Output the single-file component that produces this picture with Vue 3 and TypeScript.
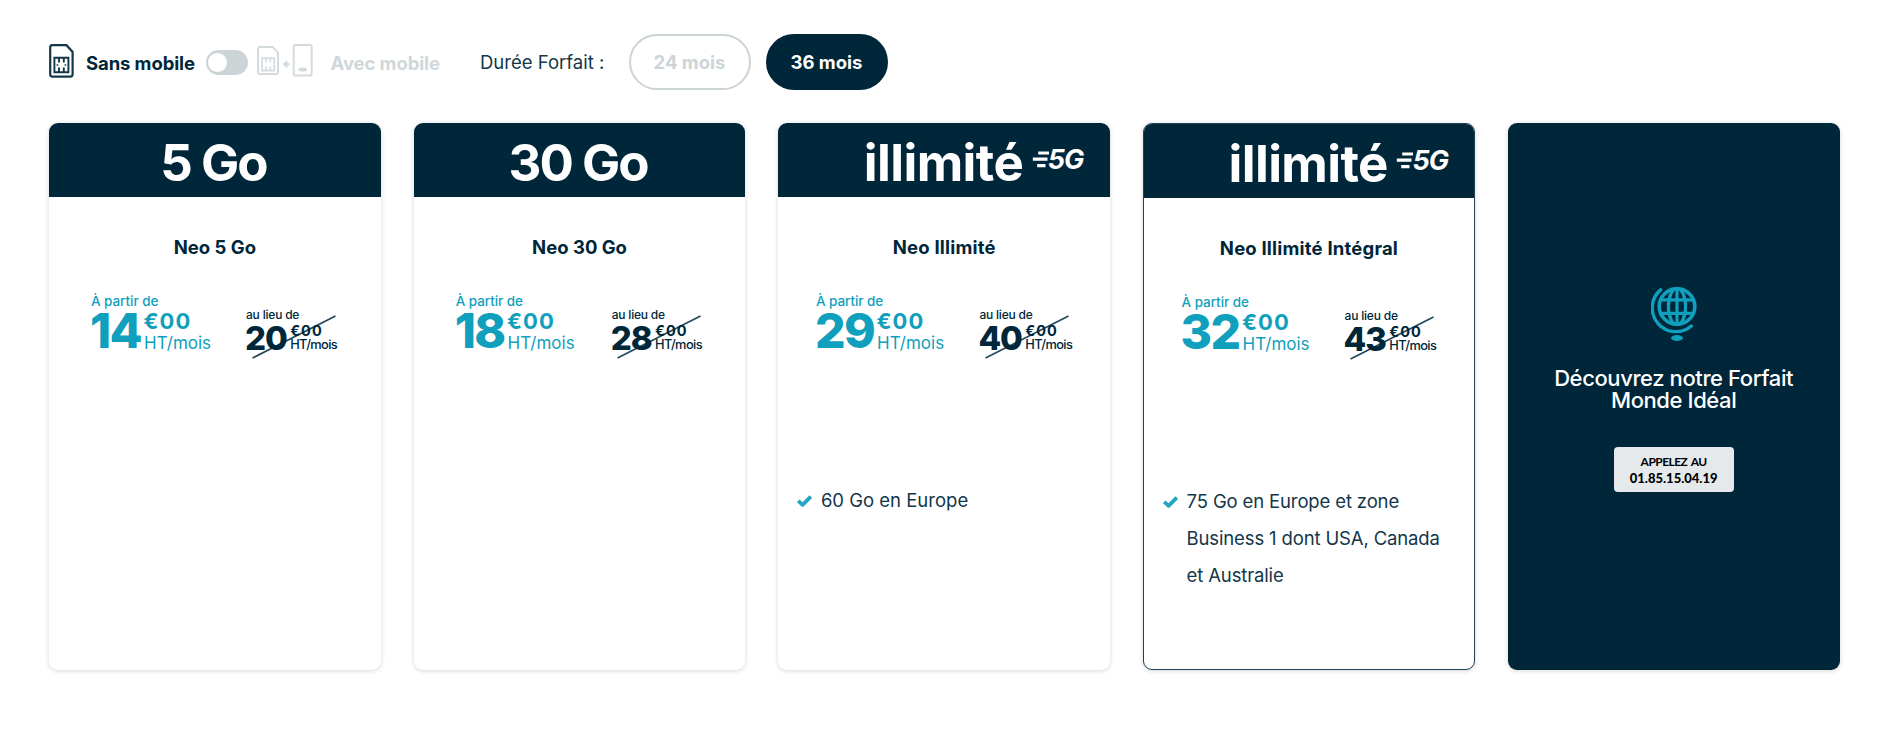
<script setup lang="ts">
import { ref } from 'vue'

interface Plan {
  id: string
  data: string
  unlimited: boolean
  name: string
  price: number
  oldPrice: number
  features: string[]
  highlighted?: boolean
  lead: number
  oldLead: number
}

const durations = [24, 36]
const duration = ref(36)
const withMobile = ref(false)

const plans: Plan[] = [
  { id: 'neo-5', data: '5 Go', unlimited: false, name: 'Neo 5 Go', price: 14, oldPrice: 20, features: [], lead: 41, oldLead: 196 },
  { id: 'neo-30', data: '30 Go', unlimited: false, name: 'Neo 30 Go', price: 18, oldPrice: 28, features: [], lead: 41, oldLead: 197 },
  { id: 'neo-illimite', data: 'illimité', unlimited: true, name: 'Neo Illimité', price: 29, oldPrice: 40, features: ['60 Go en Europe'], lead: 36.5, oldLead: 200 },
  {
    id: 'neo-integral', data: 'illimité', unlimited: true, name: 'Neo Illimité Intégral', price: 32, oldPrice: 43,
    features: ['75 Go en Europe et zone Business 1 dont USA, Canada et Australie'], highlighted: true, lead: 36.5, oldLead: 199.5,
  },
]
</script>

<template>
  <main class="page">
    <div class="toolbar">
      <svg class="sim" viewBox="0 0 25 34" fill="none" stroke="currentColor">
        <path d="M3.2 1.2H17.5L23.6 8V30.3a2.3 2.3 0 0 1-2.3 2.3H3.5a2.3 2.3 0 0 1-2.3-2.3V3.4a2.2 2.2 0 0 1 2-2.2Z" stroke-width="2.2" />
        <path d="M5.4 13.8H19.4V28.2H5.4ZM10 14v4.6M14.8 14v4.6M10 28v-4.6M14.8 28v-4.6" stroke-width="1.9" />
        <path d="M7.6 21H9.2M15.6 21H17.2" stroke-width="1.6" />
      </svg>
      <span class="option on">Sans mobile</span>
      <button class="toggle" :class="{ active: withMobile }" @click="withMobile = !withMobile"><i /></button>
      <svg class="bundle" viewBox="0 0 56 34" fill="none" stroke="currentColor">
        <path d="M3 3.9H15.5L21 9.6V29a2 2 0 0 1-2 2H3a2 2 0 0 1-2-2V5.9a2 2 0 0 1 2-2Z" stroke-width="2" />
        <path d="M5 15.2H17.3V27.6H5ZM9 15.4v3.9M13.3 15.4v3.9M9 27.4v-3.9M13.3 27.4v-3.9" stroke-width="1.7" />
        <path d="M26 21.3h6.4M29.2 18.1v6.4" stroke-width="2.4" />
        <rect x="36.7" y="1.9" width="18" height="30.6" rx="1.8" stroke-width="2" />
        <ellipse cx="45.7" cy="26.4" rx="4.4" ry="2" fill="currentColor" stroke="none" />
      </svg>
      <span class="option off">Avec mobile</span>
      <span class="label">Durée Forfait :</span>
      <div class="pills">
        <button v-for="d in durations" :key="d" class="pill" :class="{ selected: d === duration }" @click="duration = d">{{ d }} mois</button>
      </div>
    </div>

    <div class="cards">
      <article v-for="p in plans" :key="p.id" class="card" :class="{ highlighted: p.highlighted }">
        <header class="head" :class="{ unlimited: p.unlimited }">
          <span class="data">{{ p.data }}</span>
          <span v-if="p.unlimited" class="net">
            <svg viewBox="0 0 18 20" fill="none" stroke="currentColor" stroke-width="3.2">
              <path d="M6.2 3H17M0.8 9.2H15.5M5.2 15.6H13.5" />
            </svg>
            <b>5G</b>
          </span>
        </header>
        <h2 class="name" :class="{ unlimited: p.unlimited }">{{ p.name }}</h2>
        <div class="prices" :style="{ '--lead': p.lead + 'px', '--old-lead': p.oldLead + 'px' }">
          <div class="price now">
            <div class="from">À partir de</div>
            <div class="amount">
              <span class="euros">{{ p.price }}</span>
              <span class="side"><b>€00</b><span>HT/mois</span></span>
            </div>
          </div>
          <div class="price old">
            <div class="from">au lieu de</div>
            <div class="amount">
              <span class="euros">{{ p.oldPrice }}</span>
              <span class="side"><b>€00</b><span>HT/mois</span></span>
            </div>
            <svg class="slash" viewBox="0 0 84 44"><path d="M0.5 43L83.5 1" stroke="currentColor" stroke-width="1.6" /></svg>
          </div>
        </div>
        <ul class="features">
          <li v-for="f in p.features" :key="f">
            <svg class="check" viewBox="0 0 15 12" fill="none" stroke="currentColor" stroke-width="3.8" stroke-linejoin="round">
              <path d="M1.2 5.8L5.6 9.8L13.8 1.6" />
            </svg>
            <span>{{ f }}</span>
          </li>
        </ul>
      </article>

      <aside class="card world">
        <svg class="globe" viewBox="0 0 46 55" fill="none" stroke="currentColor">
          <circle cx="26" cy="19.5" r="17.8" stroke-width="3.6" />
          <ellipse cx="26" cy="19.5" rx="8.6" ry="18" stroke-width="3.2" />
          <path d="M26 1.5V37.5M10 12.8H42M10 26.4H42" stroke-width="3.2" />
          <path d="M9.6 2.9A23.6 23.6 0 1 0 40.3 39" stroke-width="3.4" stroke-linecap="round" />
          <ellipse cx="26" cy="51" rx="6" ry="3" fill="currentColor" stroke="none" />
        </svg>
        <p class="pitch">Découvrez notre Forfait<br />Monde Idéal</p>
        <a class="call"><span>APPELEZ AU</span><strong>01.85.15.04.19</strong></a>
      </aside>
    </div>
  </main>
</template>

<style>
body {
  margin: 0;
  background: #fff;
}
</style>

<style scoped>
.page {
  --navy: #00263a;
  --teal: #109fbc;
  --grey: #ccd4d8;
  box-sizing: border-box;
  width: 1892px;
  height: 742px;
  padding: 34px 52.5px 0 49px;
  overflow: hidden;
  color: var(--navy);
  font: 400 18.5px/24px Inter, "Liberation Sans", sans-serif;
}
.toolbar {
  display: flex;
  align-items: center;
  height: 56px;
}
.toolbar > * {
  flex: none;
}
.sim {
  width: 25px;
  height: 34px;
  margin: -3px 12px 0 0;
  opacity: 0.92;
}
.option {
  font-weight: 700;
  letter-spacing: -0.1px;
  padding-top: 2px;
}
.on {
  width: 120px;
}
.toggle {
  box-sizing: border-box;
  width: 42px;
  height: 25px;
  padding: 3px 2px;
  border: 0;
  border-radius: 13px;
  background: var(--grey);
  text-align: left;
  font-size: 0;
}
.toggle.active {
  text-align: right;
}
.toggle i {
  display: inline-block;
  width: 19px;
  height: 19px;
  border-radius: 50%;
  background: #fff;
}
.bundle {
  width: 56px;
  height: 34px;
  margin: -4px 17.5px 0 9px;
  color: #d4dbde;
}
.off {
  width: 149.5px;
  color: #d0d7db;
}
.label {
  width: 148.5px;
  opacity: 0.92;
}
.pills {
  display: flex;
  gap: 15px;
}
.pill {
  box-sizing: border-box;
  width: 122px;
  height: 56px;
  padding: 0;
  border: 2px solid var(--grey);
  border-radius: 28px;
  background: #fff;
  color: var(--grey);
  font: inherit;
  font-weight: 700;
}
.pill.selected {
  border-color: var(--navy);
  background: var(--navy);
  color: #fff;
}
.cards {
  display: grid;
  grid-template-columns: repeat(5, 1fr);
  gap: 33px;
  height: 546.5px;
  margin-top: 33px;
}
.card {
  box-sizing: border-box;
  overflow: hidden;
  border-radius: 9px;
  background: #fff;
  box-shadow: 0 1px 5px rgba(0, 0, 0, 0.16);
}
.highlighted {
  border: 1px solid #1f4256;
}
.head {
  box-sizing: border-box;
  display: flex;
  align-items: center;
  justify-content: center;
  height: 74px;
  padding: 5px 3px 0 0;
  background: var(--navy);
  color: #fff;
}
.head.unlimited {
  justify-content: flex-end;
  padding-right: 26.5px;
}
.highlighted .head.unlimited {
  padding-right: 25.5px;
}
.data {
  font-size: 51px;
  line-height: 60px;
  font-weight: 700;
  letter-spacing: -2px;
}
.unlimited .data {
  letter-spacing: -0.6px;
}
.net {
  display: flex;
  align-items: center;
  margin: -5px 0 0 8.5px;
}
.net svg {
  width: 18px;
  height: 20px;
}
.net b {
  margin-left: -2px;
  font-size: 27px;
  line-height: 28px;
  font-style: italic;
  letter-spacing: -0.8px;
}
.name {
  margin: 38px 0 0;
  font-size: 18.5px;
  line-height: 24px;
  font-weight: 700;
  text-align: center;
}
.name.unlimited {
  letter-spacing: 0.2px;
}
.prices {
  display: grid;
  grid-template-columns: var(--old-lead) 1fr;
  height: 62px;
  margin-top: 34px;
}
.price {
  white-space: nowrap;
}
.amount {
  display: flex;
  align-items: flex-start;
}
.side {
  display: flex;
  flex-direction: column;
}
.now {
  padding-left: var(--lead);
  color: var(--teal);
}
.now .from {
  padding-left: 1px;
  font-size: 13.5px;
  line-height: 16px;
  font-weight: 500;
  letter-spacing: -0.05px;
}
.now .euros {
  font-size: 48px;
  line-height: 43px;
  font-weight: 800;
  letter-spacing: -1.6px;
}
.now .side {
  gap: 4px;
  padding: 3px 0 0 2.5px;
}
.now b {
  font-size: 22px;
  line-height: 18px;
  letter-spacing: 1px;
}
.now .side span {
  font-size: 17px;
  line-height: 18px;
  padding-left: 0.5px;
}
.old {
  position: relative;
  padding-top: 15px;
}
.old .from {
  padding-left: 1px;
  font-size: 12px;
  line-height: 14px;
  font-weight: 500;
  letter-spacing: -0.2px;
}
.old .euros {
  font-size: 33px;
  line-height: 33px;
  font-weight: 800;
  letter-spacing: -1.1px;
}
.old .side {
  gap: 1.5px;
  padding: 3px 0 0 3.5px;
}
.old b {
  font-size: 14.5px;
  line-height: 12px;
  letter-spacing: 1px;
}
.old .side span {
  font-size: 12.8px;
  line-height: 12px;
  font-weight: 500;
  letter-spacing: -0.6px;
}
.slash {
  position: absolute;
  top: 22px;
  left: 6.5px;
  width: 84px;
  height: 44px;
  opacity: 0.85;
}
.features {
  margin: 127px 0 0;
  padding: 0 15px 0 19px;
  list-style: none;
  line-height: 37px;
  opacity: 0.92;
}
.features li {
  display: flex;
  align-items: flex-start;
  gap: 8.5px;
}
.highlighted .features li {
  letter-spacing: -0.14px;
}
.check {
  flex: none;
  width: 15px;
  height: 12px;
  margin-top: 12.5px;
  color: var(--teal);
}
.world {
  display: flex;
  flex-direction: column;
  align-items: center;
  padding-top: 164px;
  background: var(--navy);
  color: #fff;
}
.globe {
  width: 46px;
  height: 55px;
  color: var(--teal);
}
.pitch {
  margin: 25px 0 0;
  font-size: 22px;
  line-height: 22px;
  font-weight: 500;
  letter-spacing: -0.4px;
  text-align: center;
}
.call {
  display: flex;
  flex-direction: column;
  align-items: center;
  justify-content: center;
  width: 120px;
  height: 45px;
  margin-top: 36px;
  border-radius: 4px;
  background: #e5e9ec;
  color: #000;
  font: 700 12px/16px Lato, "Open Sans", sans-serif;
}
.call span {
  letter-spacing: -0.55px;
  word-spacing: 1.5px;
}
.call strong {
  font-size: 13px;
}
</style>
